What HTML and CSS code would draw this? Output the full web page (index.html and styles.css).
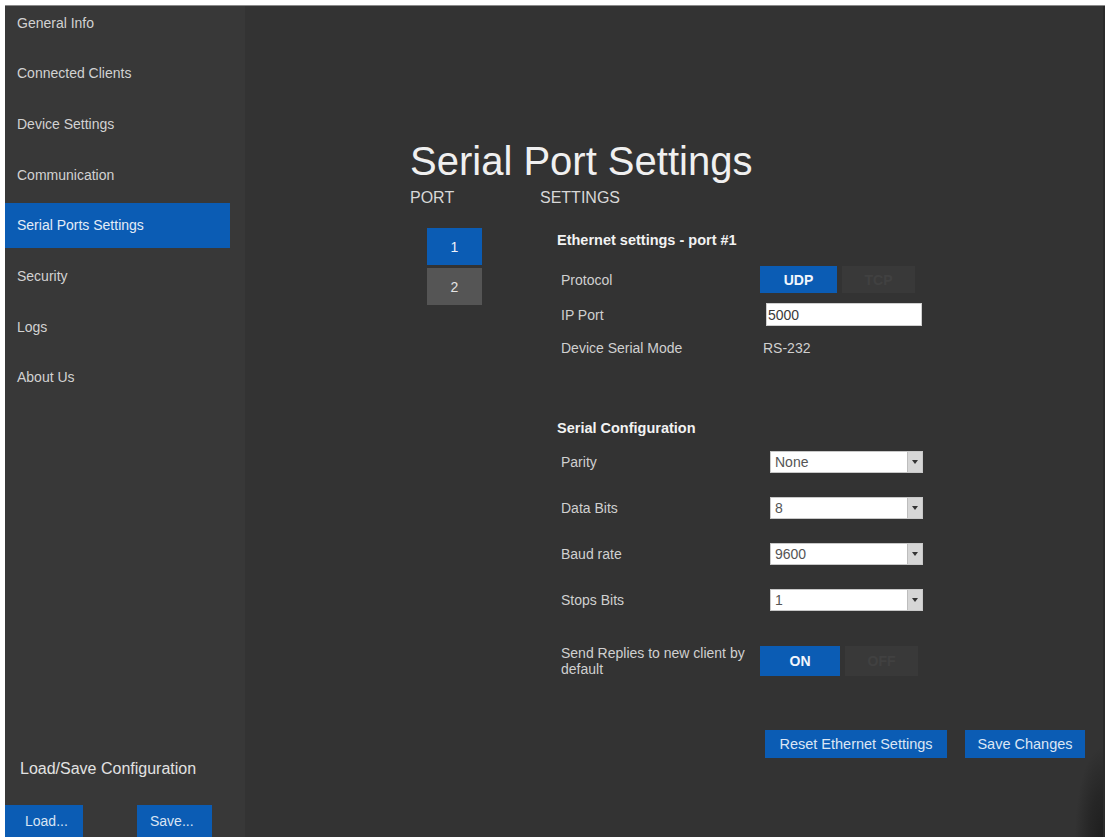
FILE: index.html
```html
<!DOCTYPE html>
<html lang="en">
<head>
<meta charset="utf-8">
<title>Serial Port Settings</title>
<link rel="stylesheet" href="styles.css">
</head>
<body>
<div class="app">
  <aside class="sidebar">
    <nav class="nav">
      <div class="nav-item">General Info</div>
      <div class="nav-item">Connected Clients</div>
      <div class="nav-item">Device Settings</div>
      <div class="nav-item">Communication</div>
      <div class="nav-item active">Serial Ports Settings</div>
      <div class="nav-item">Security</div>
      <div class="nav-item">Logs</div>
      <div class="nav-item">About Us</div>
    </nav>
    <div class="side-footer">
      <div class="side-footer-title">Load/Save Configuration</div>
      <div class="side-buttons">
        <button class="side-btn load">Load...</button>
        <button class="side-btn save">Save...</button>
      </div>
    </div>
  </aside>
  <main class="main">
    <h1 class="title">Serial Port Settings</h1>
    <div class="columns">
      <div class="col-head port-head">PORT</div>
      <div class="col-head">SETTINGS</div>
      <div class="ports">
        <button class="port-btn selected">1</button>
        <button class="port-btn">2</button>
      </div>
      <div class="settings">
        <div class="section-title">Ethernet settings - port #1</div>
        <div class="row row-protocol">
          <div class="label">Protocol</div>
          <div class="toggle">
            <span class="toggle-on">UDP</span>
            <span class="toggle-off">TCP</span>
          </div>
        </div>
        <div class="row row-ip">
          <div class="label">IP Port</div>
          <div class="text-input">5000</div>
        </div>
        <div class="row row-mode">
          <div class="label">Device Serial Mode</div>
          <div class="value">RS-232</div>
        </div>
        <div class="section-title section-serial">Serial Configuration</div>
        <div class="row row-select first-select">
          <div class="label">Parity</div>
          <div class="select"><span class="select-text">None</span><span class="select-arrow"></span></div>
        </div>
        <div class="row row-select">
          <div class="label">Data Bits</div>
          <div class="select"><span class="select-text">8</span><span class="select-arrow"></span></div>
        </div>
        <div class="row row-select">
          <div class="label">Baud rate</div>
          <div class="select"><span class="select-text">9600</span><span class="select-arrow"></span></div>
        </div>
        <div class="row row-select">
          <div class="label">Stops Bits</div>
          <div class="select"><span class="select-text">1</span><span class="select-arrow"></span></div>
        </div>
        <div class="row row-replies">
          <div class="label label-wrap">Send Replies to new client by default</div>
          <div class="toggle">
            <span class="toggle-on wide">ON</span>
            <span class="toggle-off">OFF</span>
          </div>
        </div>
        <div class="actions">
          <button class="action-btn reset">Reset Ethernet Settings</button>
          <button class="action-btn savechg">Save Changes</button>
        </div>
      </div>
    </div>
  </main>
</div>
</body>
</html>
```
FILE: styles.css
```css
* { box-sizing: border-box; }

html, body {
  margin: 0;
  background: #ffffff;
}

body {
  padding: 5px 4px 0 5px;
  font-family: "Liberation Sans", Arial, sans-serif;
  overflow: hidden;
}

.app {
  display: flex;
  height: 832px;
  overflow: hidden;
  border-top: 1px solid #8a8a8a;
}

/* Sidebar */
.sidebar {
  width: 240px;
  flex: 0 0 240px;
  background: #383838;
  display: flex;
  flex-direction: column;
}

.nav {
  display: flex;
  flex-direction: column;
  gap: 5.7px;
  margin-top: -6px;
}

.nav-item {
  height: 45px;
  width: 225px;
  display: flex;
  align-items: center;
  padding-left: 12px;
  font-size: 14px;
  color: #d2d2d2;
}

.nav-item.active {
  background: #0b5cb4;
  color: #e4ecf7;
}

.side-footer {
  margin-top: auto;
}

.side-footer-title {
  font-size: 16px;
  line-height: 20px;
  color: #e2e2e2;
  padding-left: 15px;
}

.side-buttons {
  display: flex;
  gap: 54px;
  margin-top: 26px;
}

.side-btn {
  height: 32px;
  border: 0;
  background: #0b5cb4;
  color: #d9e4f3;
  font-family: "Liberation Sans", Arial, sans-serif;
  font-size: 14px;
  text-align: left;
  padding: 0 0 0 20px;
}

.side-btn.load { width: 78px; }
.side-btn.save { width: 75px; padding-left: 13px; }

/* Main */
.main {
  flex: 1;
  background:
    radial-gradient(ellipse 28px 90px at 100% 100%, #1e1e1e 0%, rgba(30,30,30,0.6) 50%, rgba(51,51,51,0) 100%),
    #333333;
  padding: 132px 0 0 165px;
  border-right: 2px solid #2a2a2a;
}

.title {
  margin: 0;
  font-weight: normal;
  font-size: 40px;
  line-height: 46px;
  color: #f0f0f0;
}

.columns {
  display: grid;
  grid-template-columns: 130px 1fr;
  margin-top: 4px;
}

.col-head {
  font-size: 16px;
  line-height: 20px;
  color: #d8d8d8;
}

.ports {
  display: flex;
  flex-direction: column;
  gap: 3px;
  padding: 20px 0 0 17px;
}

.port-btn {
  width: 55px;
  height: 37px;
  border: 0;
  background: #555555;
  color: #e4e4e4;
  font-family: "Liberation Sans", Arial, sans-serif;
  font-size: 14px;
}

.port-btn.selected {
  background: #0b5cb4;
  color: #eef3fb;
}

.settings {
  display: flex;
  flex-direction: column;
  padding-top: 22px;
}

.section-title {
  font-size: 14.5px;
  font-weight: bold;
  line-height: 20px;
  color: #f2f2f2;
  padding-left: 17px;
}

.section-serial { margin-top: 60px; }

.row {
  display: flex;
  align-items: center;
  padding-left: 21px;
}

.label {
  width: 199px;
  flex: 0 0 199px;
  font-size: 14px;
  color: #d0d0d0;
}

.label-wrap {
  padding-right: 8px;
  line-height: 16px;
}

.row-protocol { height: 27px; margin-top: 16px; }
.row-ip { height: 23px; margin-top: 10px; }
.row-mode { height: 20px; margin-top: 12px; }
.row-select { height: 22px; margin-top: 24px; }
.row-select.first-select { margin-top: 13px; }
.row-replies { height: 30px; margin-top: 35px; }

.toggle {
  display: flex;
  gap: 5px;
  height: 100%;
}

.toggle-on, .toggle-off {
  display: flex;
  align-items: center;
  justify-content: center;
  font-size: 14px;
  font-weight: bold;
}

.toggle-on {
  width: 77px;
  background: #0b5cb4;
  color: #f2f6fc;
}

.toggle-on.wide { width: 80px; }

.toggle-off {
  width: 73px;
  background: #393939;
  color: #414141;
}

.text-input {
  margin-left: 6px;
  width: 156px;
  height: 23px;
  background: #ffffff;
  border: 1px solid #cfcfcf;
  font-size: 14px;
  color: #3a3a3a;
  display: flex;
  align-items: center;
  padding-left: 1px;
}

.value {
  margin-left: 3px;
  font-size: 14px;
  color: #d0d0d0;
}

.select {
  margin-left: 10px;
  width: 153px;
  height: 22px;
  background: #ffffff;
  border: 1px solid #c8c8c8;
  display: flex;
  align-items: stretch;
}

.select-text {
  flex: 1;
  display: flex;
  align-items: center;
  padding-left: 4px;
  font-size: 14px;
  color: #555555;
}

.select-arrow {
  width: 15px;
  background: #d6d6d6;
  border-left: 1px solid #bdbdbd;
  position: relative;
}

.select-arrow::after {
  content: "";
  position: absolute;
  left: 4px;
  top: 8px;
  border-left: 3px solid transparent;
  border-right: 3px solid transparent;
  border-top: 4px solid #333333;
}

.actions {
  display: flex;
  gap: 18px;
  margin-top: 54px;
  padding-left: 225px;
}

.action-btn {
  height: 28px;
  border: 0;
  background: #0b5cb4;
  color: #dce6f4;
  font-family: "Liberation Sans", Arial, sans-serif;
  font-size: 14.5px;
  padding: 0;
}

.action-btn.reset { width: 182px; }
.action-btn.savechg { width: 120px; }
```
